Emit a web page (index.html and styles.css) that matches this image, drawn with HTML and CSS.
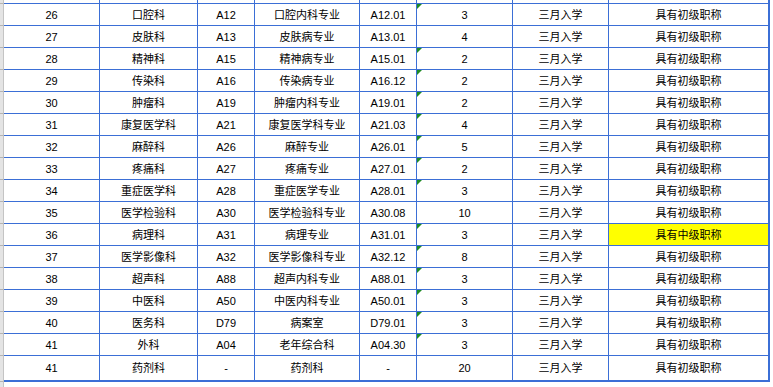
FILE: index.html
```html
<!DOCTYPE html>
<html lang="zh-CN">
<head>
<meta charset="utf-8">
<title>科室专业表</title>
<link rel="stylesheet" href="styles.css">
</head>
<body>
<div class="page">
<div class="sheet">
  <div class="hd top"></div><div class="c top"></div><div class="c top"></div><div class="c top"></div><div class="c top"></div><div class="c top"></div><div class="c top"></div><div class="c top"></div><div class="c top last"></div>

  <div class="hd"></div><div class="c">26</div><div class="c">口腔科</div><div class="c">A12</div><div class="c">口腔内科专业</div><div class="c">A12.01</div><div class="c tri">3</div><div class="c">三月入学</div><div class="c last">具有初级职称</div>
  <div class="hd"></div><div class="c">27</div><div class="c">皮肤科</div><div class="c">A13</div><div class="c">皮肤病专业</div><div class="c">A13.01</div><div class="c">4</div><div class="c">三月入学</div><div class="c last">具有初级职称</div>
  <div class="hd"></div><div class="c">28</div><div class="c">精神科</div><div class="c">A15</div><div class="c">精神病专业</div><div class="c">A15.01</div><div class="c tri">2</div><div class="c">三月入学</div><div class="c last">具有初级职称</div>
  <div class="hd"></div><div class="c">29</div><div class="c">传染科</div><div class="c">A16</div><div class="c">传染病专业</div><div class="c">A16.12</div><div class="c tri">2</div><div class="c">三月入学</div><div class="c last">具有初级职称</div>
  <div class="hd"></div><div class="c">30</div><div class="c">肿瘤科</div><div class="c">A19</div><div class="c">肿瘤内科专业</div><div class="c">A19.01</div><div class="c tri">2</div><div class="c">三月入学</div><div class="c last">具有初级职称</div>
  <div class="hd"></div><div class="c">31</div><div class="c">康复医学科</div><div class="c">A21</div><div class="c">康复医学科专业</div><div class="c">A21.03</div><div class="c tri">4</div><div class="c">三月入学</div><div class="c last">具有初级职称</div>
  <div class="hd"></div><div class="c">32</div><div class="c">麻醉科</div><div class="c">A26</div><div class="c">麻醉专业</div><div class="c">A26.01</div><div class="c tri">5</div><div class="c">三月入学</div><div class="c last">具有初级职称</div>
  <div class="hd"></div><div class="c">33</div><div class="c">疼痛科</div><div class="c">A27</div><div class="c">疼痛专业</div><div class="c">A27.01</div><div class="c tri">2</div><div class="c">三月入学</div><div class="c last">具有初级职称</div>
  <div class="hd"></div><div class="c">34</div><div class="c">重症医学科</div><div class="c">A28</div><div class="c">重症医学专业</div><div class="c">A28.01</div><div class="c tri">3</div><div class="c">三月入学</div><div class="c last">具有初级职称</div>
  <div class="hd"></div><div class="c">35</div><div class="c">医学检验科</div><div class="c">A30</div><div class="c">医学检验科专业</div><div class="c">A30.08</div><div class="c">10</div><div class="c">三月入学</div><div class="c last">具有初级职称</div>
  <div class="hd"></div><div class="c">36</div><div class="c">病理科</div><div class="c">A31</div><div class="c">病理专业</div><div class="c">A31.01</div><div class="c tri">3</div><div class="c">三月入学</div><div class="c last hl">具有中级职称</div>
  <div class="hd"></div><div class="c">37</div><div class="c">医学影像科</div><div class="c">A32</div><div class="c">医学影像科专业</div><div class="c">A32.12</div><div class="c tri">8</div><div class="c">三月入学</div><div class="c last">具有初级职称</div>
  <div class="hd"></div><div class="c">38</div><div class="c">超声科</div><div class="c">A88</div><div class="c">超声内科专业</div><div class="c">A88.01</div><div class="c tri">3</div><div class="c">三月入学</div><div class="c last">具有初级职称</div>
  <div class="hd"></div><div class="c">39</div><div class="c">中医科</div><div class="c">A50</div><div class="c">中医内科专业</div><div class="c">A50.01</div><div class="c tri">3</div><div class="c">三月入学</div><div class="c last">具有初级职称</div>
  <div class="hd"></div><div class="c">40</div><div class="c">医务科</div><div class="c">D79</div><div class="c">病案室</div><div class="c">D79.01</div><div class="c tri">3</div><div class="c">三月入学</div><div class="c last">具有初级职称</div>
  <div class="hd"></div><div class="c">41</div><div class="c">外科</div><div class="c">A04</div><div class="c">老年综合科</div><div class="c">A04.30</div><div class="c tri">3</div><div class="c">三月入学</div><div class="c last">具有初级职称</div>
  <div class="hd end"></div><div class="c end">41</div><div class="c end">药剂科</div><div class="c end">-</div><div class="c end">药剂科</div><div class="c end">-</div><div class="c end">20</div><div class="c end">三月入学</div><div class="c end last">具有初级职称</div>
</div>
<div class="filler"><div class="hd fill"></div></div>
</div>
</body>
</html>
```

FILE: styles.css
```css
html, body {
  margin: 0;
  padding: 0;
  background: #ffffff;
}

body {
  font-family: "Liberation Sans", "Noto Sans CJK SC", sans-serif;
  font-size: 11px;
  color: #000000;
}

.page {
  display: flex;
  flex-direction: column;
  height: 387px;
  overflow: hidden;
}

.sheet {
  display: grid;
  grid-template-columns: 4px 96px 98px 57px 105px 57px 96px 96px 161px;
  grid-template-rows: 4px repeat(16, 22px) 26px;
}

.hd {
  background: #e4e4e4;
  border-right: 1px solid #c4c4c4;
  border-bottom: 1px solid #b4b4b4;
  box-sizing: border-box;
}

.c {
  box-sizing: border-box;
  border-right: 1px solid #3b6fd6;
  border-bottom: 1px solid #3b6fd6;
  display: flex;
  align-items: center;
  justify-content: center;
  white-space: nowrap;
  position: relative;
  line-height: 1;
  padding-top: 1px;
}

.c.last {
  border-right-width: 2px;
}

.c.end {
  border-bottom-width: 2px;
}

.hd.end {
  border-bottom: 1px solid #b4b4b4;
}

.hl {
  background: #ffff00;
}

.tri::before {
  content: "";
  position: absolute;
  left: 0;
  top: 0;
  width: 0;
  height: 0;
  border-top: 5px solid #1f8b24;
  border-right: 5px solid transparent;
}

.filler {
  flex: 1;
  display: flex;
}

.hd.fill {
  width: 4px;
  border-bottom: none;
}
```
